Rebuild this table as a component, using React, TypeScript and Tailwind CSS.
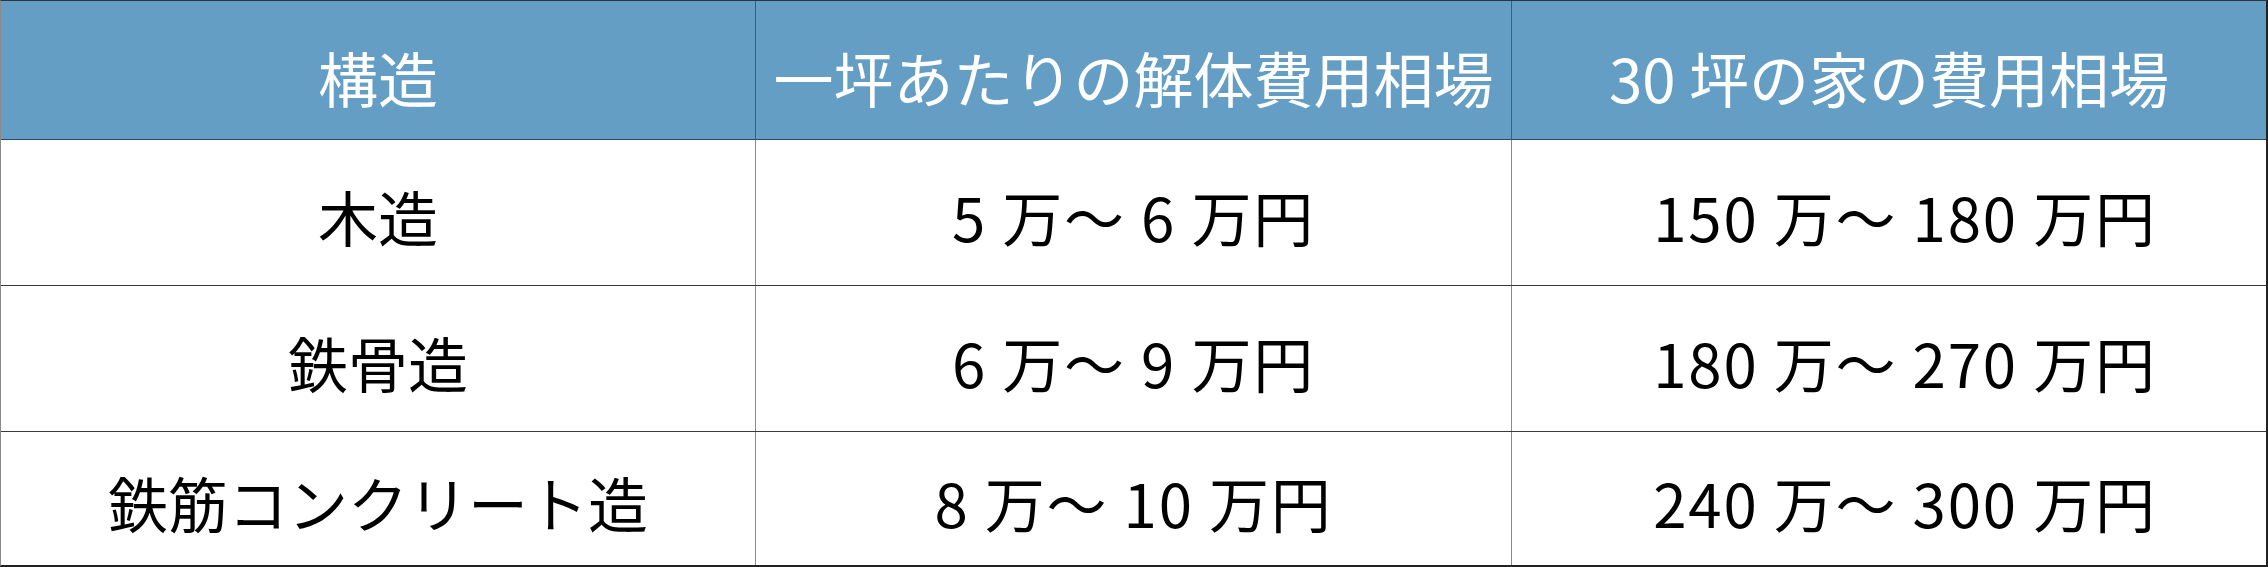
const rows = [
  { kind: "木造", unit: "5 万〜 6 万円", house: "150 万〜 180 万円" },
  { kind: "鉄骨造", unit: "6 万〜 9 万円", house: "180 万〜 270 万円" },
  { kind: "鉄筋コンクリート造", unit: "8 万〜 10 万円", house: "240 万〜 300 万円" },
];

const rowHeights = ["h-[146px]", "h-[146px]", "h-[133px]"];

export default function App() {
  return (
    <div
      className="w-[2268px] h-[567px] bg-white border-t border-l border-r-2 border-b-2 border-t-[#2a3540] border-l-[#8a8a8a] border-r-[#222222] border-b-[#222222] overflow-hidden"
      style={{ fontFamily: '"Noto Sans CJK JP", "Noto Sans", sans-serif' }}
    >
      {/* Header */}
      <div className="grid grid-cols-[755px_756px_1fr] h-[139px] bg-[#659ec4] border-b border-[#2c4a5f] text-white text-[60px] font-normal">
        <div className="flex items-center justify-center pt-[14px] border-r-[1.5px] border-[#4a5a66]">構造</div>
        <div className="flex items-center justify-center pt-[14px] border-r-[1.5px] border-[#4a5a66]">一坪あたりの解体費用相場</div>
        <div className="flex items-center justify-center pt-[14px]">30 坪の家の費用相場</div>
      </div>

      {/* Body */}
      {rows.map((r, i) => (
        <div
          key={r.kind}
          className={`grid grid-cols-[755px_756px_1fr] ${rowHeights[i]} ${i < 2 ? "border-b border-[#3a3a3a]" : ""} text-black text-[60px] font-normal`}
        >
          <div className="flex items-center justify-center pt-[6px] border-r-[1.5px] border-[#8a8a8a]">{r.kind}</div>
          <div className="flex items-center justify-center pt-[6px] tracking-[0.03em] border-r-[1.5px] border-[#8a8a8a]">{r.unit}</div>
          <div className="flex items-center justify-center pt-[6px] pl-[32px] tracking-[0.03em]">{r.house}</div>
        </div>
      ))}
    </div>
  );
}
